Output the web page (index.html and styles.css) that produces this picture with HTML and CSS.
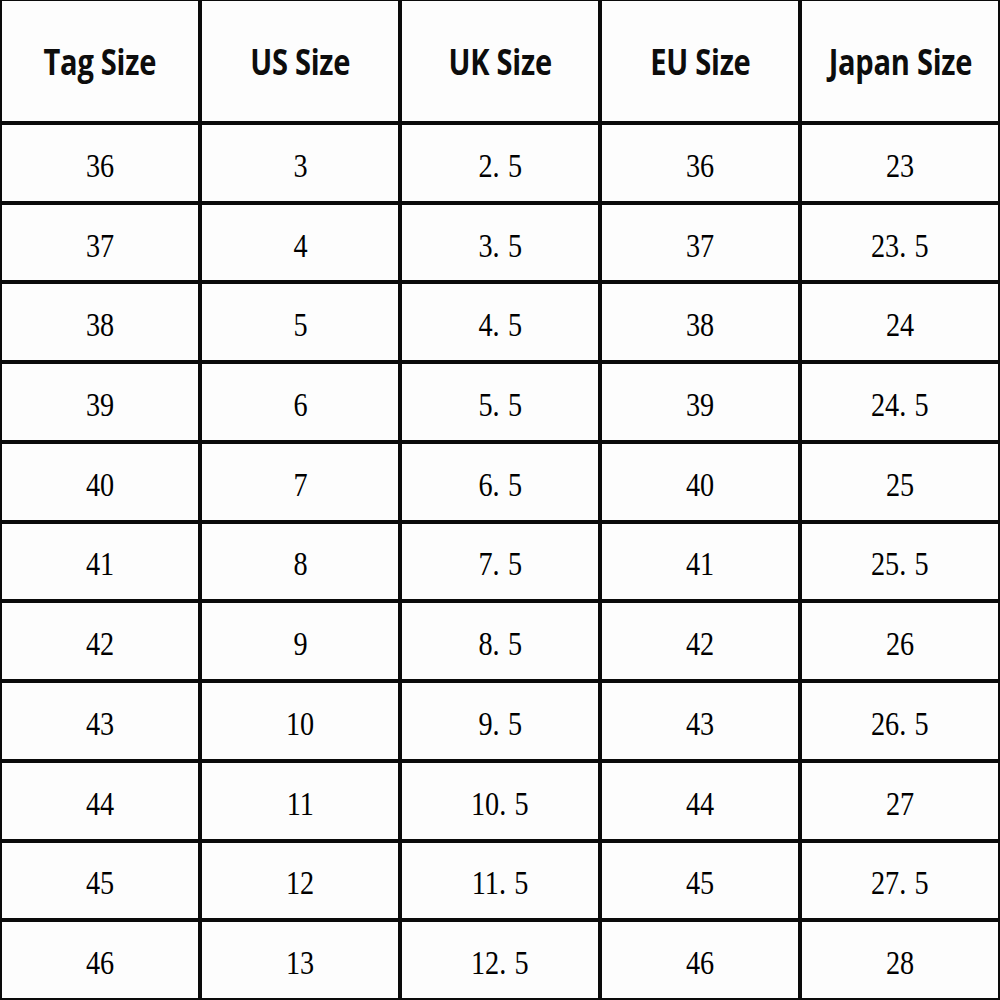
FILE: index.html
```html
<!DOCTYPE html>
<html>
<head>
<meta charset="utf-8">
<link rel="stylesheet" href="styles.css">
</head>
<body>
<div class="chart">
  <div class="cell head"><span>Tag Size</span></div>
  <div class="cell head"><span>US Size</span></div>
  <div class="cell head"><span>UK Size</span></div>
  <div class="cell head"><span>EU Size</span></div>
  <div class="cell head"><span>Japan Size</span></div>

  <div class="cell"><span>36</span></div><div class="cell"><span>3</span></div><div class="cell"><span>2<i class="pt">.</i>5</span></div><div class="cell"><span>36</span></div><div class="cell"><span>23</span></div>
  <div class="cell"><span>37</span></div><div class="cell"><span>4</span></div><div class="cell"><span>3<i class="pt">.</i>5</span></div><div class="cell"><span>37</span></div><div class="cell"><span>23<i class="pt">.</i>5</span></div>
  <div class="cell"><span>38</span></div><div class="cell"><span>5</span></div><div class="cell"><span>4<i class="pt">.</i>5</span></div><div class="cell"><span>38</span></div><div class="cell"><span>24</span></div>
  <div class="cell"><span>39</span></div><div class="cell"><span>6</span></div><div class="cell"><span>5<i class="pt">.</i>5</span></div><div class="cell"><span>39</span></div><div class="cell"><span>24<i class="pt">.</i>5</span></div>
  <div class="cell"><span>40</span></div><div class="cell"><span>7</span></div><div class="cell"><span>6<i class="pt">.</i>5</span></div><div class="cell"><span>40</span></div><div class="cell"><span>25</span></div>
  <div class="cell"><span>41</span></div><div class="cell"><span>8</span></div><div class="cell"><span>7<i class="pt">.</i>5</span></div><div class="cell"><span>41</span></div><div class="cell"><span>25<i class="pt">.</i>5</span></div>
  <div class="cell"><span>42</span></div><div class="cell"><span>9</span></div><div class="cell"><span>8<i class="pt">.</i>5</span></div><div class="cell"><span>42</span></div><div class="cell"><span>26</span></div>
  <div class="cell"><span>43</span></div><div class="cell"><span>10</span></div><div class="cell"><span>9<i class="pt">.</i>5</span></div><div class="cell"><span>43</span></div><div class="cell"><span>26<i class="pt">.</i>5</span></div>
  <div class="cell"><span>44</span></div><div class="cell"><span>11</span></div><div class="cell"><span>10<i class="pt">.</i>5</span></div><div class="cell"><span>44</span></div><div class="cell"><span>27</span></div>
  <div class="cell"><span>45</span></div><div class="cell"><span>12</span></div><div class="cell"><span>11<i class="pt">.</i>5</span></div><div class="cell"><span>45</span></div><div class="cell"><span>27<i class="pt">.</i>5</span></div>
  <div class="cell"><span>46</span></div><div class="cell"><span>13</span></div><div class="cell"><span>12<i class="pt">.</i>5</span></div><div class="cell"><span>46</span></div><div class="cell"><span>28</span></div>
</div>
</body>
</html>
```

FILE: styles.css
```css
html, body {
  margin: 0;
  padding: 0;
  background: #fdfdfd;
}

.chart {
  width: 1000px;
  height: 1000px;
  box-sizing: border-box;
  padding: 1px 2px 2px 2px;
  background: #0a0a0a;
  display: grid;
  grid-template-columns: repeat(5, 1fr);
  grid-template-rows: 120px repeat(11, 1fr);
  gap: 4px;
}

.cell {
  background: #fdfdfd;
  display: flex;
  align-items: center;
  justify-content: center;
  font-family: "Liberation Serif", serif;
  font-size: 34px;
  color: #000;
  padding-top: 6px;
  box-sizing: border-box;
}

.cell span {
  display: inline-block;
  transform: scaleX(0.83);
  white-space: nowrap;
  line-height: 1;
}

.cell .pt {
  font-style: normal;
  margin-right: 10px;
}

.cell.head {
  font-family: "Open Sans", sans-serif;
  font-weight: 700;
  font-size: 35px;
  padding-top: 0;
  color: #0d0d0d;
}

.cell.head span {
  transform: scaleX(0.83);
  letter-spacing: -0.3px;
}
```
